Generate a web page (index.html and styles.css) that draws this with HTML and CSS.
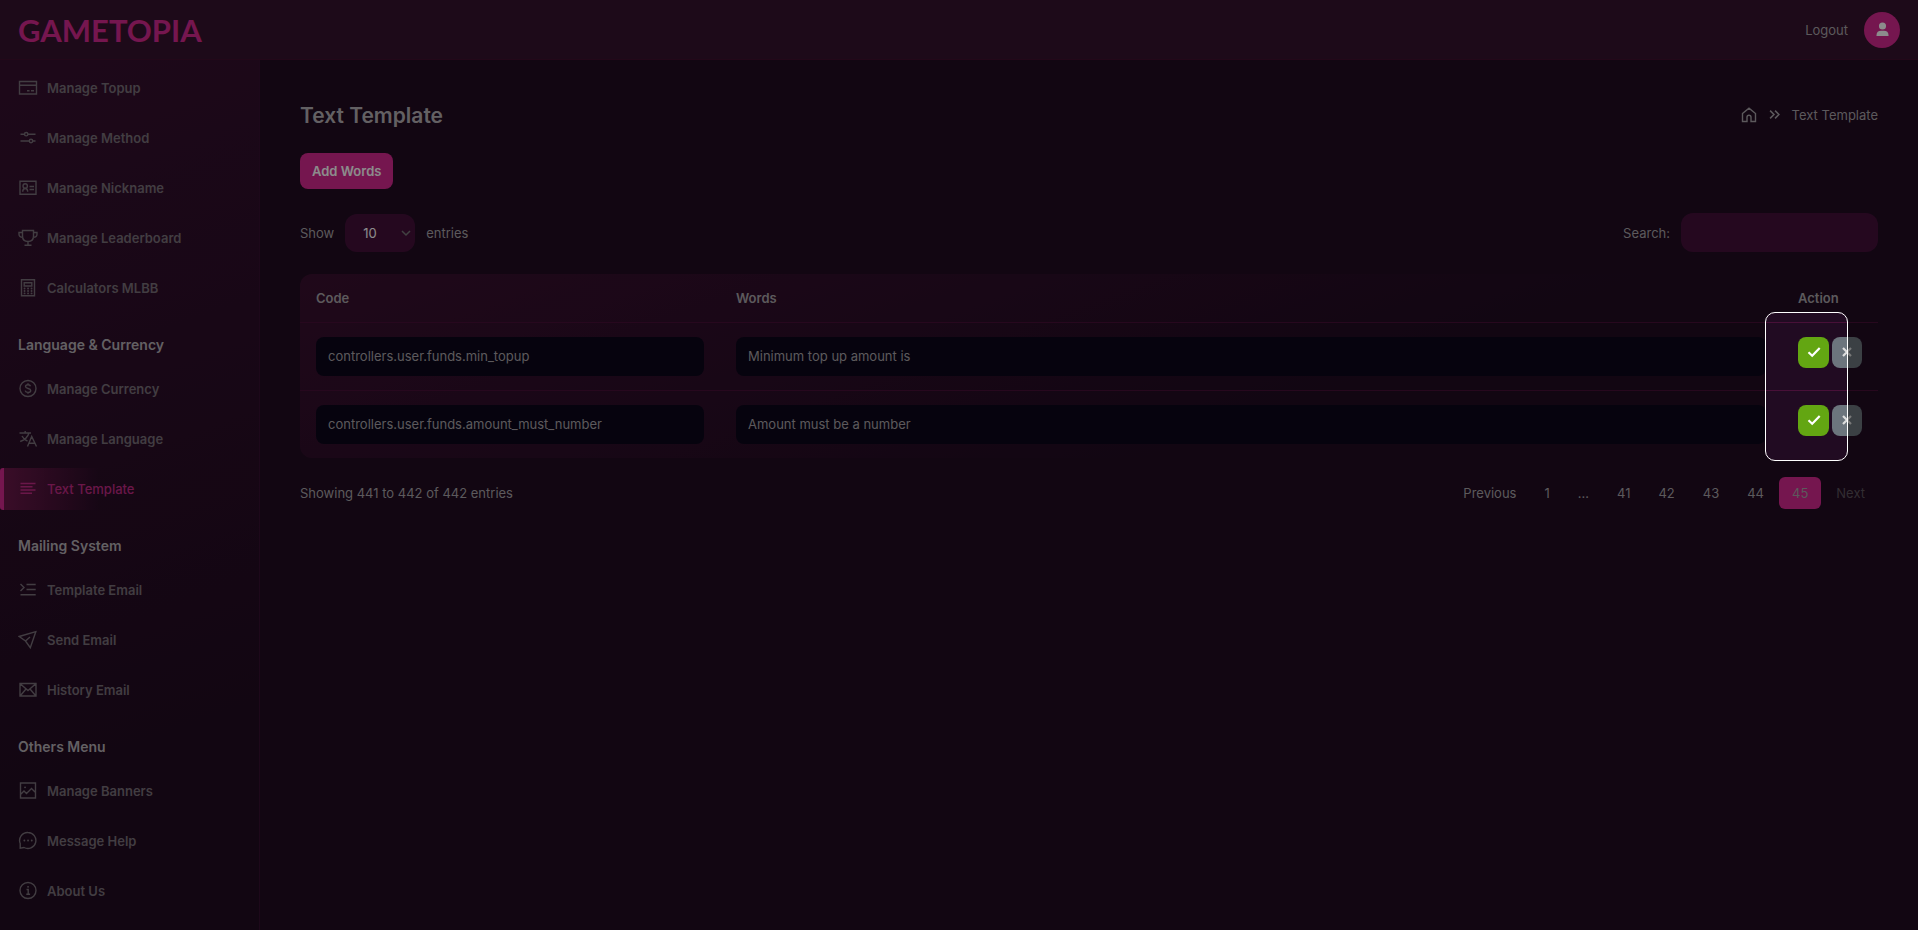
FILE: index.html
```html
<!DOCTYPE html>
<html lang="en">
<head>
    <meta charset="UTF-8">
    <meta name="viewport" content="width=device-width, initial-scale=1.0">
    <title>Text Template</title>
    <link rel="stylesheet" href="styles.css">
</head>
<body>

<!-- Header -->
<header class="header">
    <a href="#" class="logo">GAMETOPIA</a>
    <div class="header-user">
        <a href="#" class="logout">Logout</a>
        <a href="#" class="avatar" aria-label="Profile">
            <svg viewBox="0 0 16 16"><circle cx="8" cy="4.2" r="3.8"/><path d="M1.6 15v-1.200c0-3 1.900-4.600 4.900-4.600h3c3 0 4.900 1.600 4.900 4.600V15z"/></svg>
        </a>
    </div>
</header>

<div class="layout">
    <!-- Sidebar -->
    <nav class="sidebar">
        <ul class="menu">
            <li><a href="#"><svg viewBox="0 0 20 20"><path d="M1.500 3.500h17v12.500h-17zM1.500 7.200h17M9 12.800h2.500M13 12.800h3"/></svg>Manage Topup</a></li>
            <li><a href="#"><svg viewBox="0 0 20 20"><path d="M2.500 6.200h4M10 6.200h7.500M2.500 13h8.800M14.700 13h2.800"/><circle cx="8.200" cy="6.200" r="1.700"/><circle cx="13" cy="13" r="1.700"/></svg>Manage Method</a></li>
            <li><a href="#"><svg viewBox="0 0 20 20"><path d="M2 3.200h16v13H2zM4.700 13.700c0-2.200 1-3.200 2.500-3.200s2.500 1 2.500 3.200M11.500 8.500h4.500M11.500 11.500h4.500"/><circle cx="7.200" cy="8" r="2.200"/></svg>Manage Nickname</a></li>
            <li><a href="#"><svg viewBox="0 0 20 20"><path d="M4.500 2.500h11v5.500c0 3.500-2.200 5.500-5.500 5.500s-5.500-2-5.500-5.500zM4.500 4.500H1v1.700C1 8.200 2.500 9.200 4.800 9.200M15.500 4.500H19v1.700c0 2-1.500 3-3.800 3M10 13.500V17.300M6.500 17.300h7"/></svg>Manage Leaderboard</a></li>
            <li><a href="#"><svg viewBox="0 0 20 20"><path d="M3.500 1.700h13v16h-13zM6.200 4.700h7.600v3.300H6.200z"/><path class="dots" d="M6.500 10.500h.1M10 10.500h.1M13.500 10.500h.1M6.500 13h.1M10 13h.1M13.500 13h.1M6.500 15.400h.1M10 15.400h.1M13.500 15.400h.1"/></svg>Calculators MLBB</a></li>
        </ul>

        <h5 class="menu-title">Language &amp; Currency</h5>
        <ul class="menu">
            <li><a href="#"><svg viewBox="0 0 20 20"><circle cx="10" cy="9.500" r="8"/><path d="M12.500 7.300C12.200 6.200 11.200 5.700 10 5.700c-1.500 0-2.500.7-2.500 1.800 0 2.600 5.200 1.300 5.200 4 0 1.200-1.100 1.900-2.700 1.900-1.400 0-2.500-.6-2.800-1.800M10 4.300v1.400M10 13.400v1.400"/></svg>Manage Currency</a></li>
            <li><a href="#"><svg viewBox="0 0 20 20"><path d="M1.500 4h11.500M7.200 2v2M11 4C9.800 8 6.500 11 2.200 12.500M4 7c1.300 2.600 3.200 4.200 5.500 5M9.500 17.500l4.200-10 4.800 10M11 14.300h5.500"/></svg>Manage Language</a></li>
            <li class="active"><a href="#"><svg viewBox="0 0 20 20"><path d="M2.500 4.500h15M2.500 7.700h12M2.500 11h15M2.500 14.300h11.500"/></svg>Text Template</a></li>
        </ul>

        <h5 class="menu-title">Mailing System</h5>
        <ul class="menu">
            <li><a href="#"><svg viewBox="0 0 20 20"><path d="M2.500 4l3.500 3.500L2.500 11M8.500 4.500h9.200M8.500 9.500h9.200M2.500 14.700h15.200"/></svg>Template Email</a></li>
            <li><a href="#"><svg viewBox="0 0 20 20"><path d="M17.800 1.700L1.200 6.500l6.300 4.500 4.800 6.700zM7.500 11l4.500-4"/></svg>Send Email</a></li>
            <li><a href="#"><svg viewBox="0 0 20 20"><path d="M2 3.500h16v12.500H2zM2.500 4L10 10.500 17.500 4M2.500 15.500L8 9M17.500 15.500L12 9"/></svg>History Email</a></li>
        </ul>

        <h5 class="menu-title">Others Menu</h5>
        <ul class="menu">
            <li><a href="#"><svg viewBox="0 0 20 20"><path d="M2.500 2h15v15h-15zM2.500 13.500l3.500-3.500 2.500 2.500 5-5 4 4"/><path class="dots" d="M7 6.300h.1"/></svg>Manage Banners</a></li>
            <li><a href="#"><svg viewBox="0 0 20 20"><path d="M10 1.500a8 8 0 1 1-4 15L2.200 17.200V12.500A8 8 0 0 1 10 1.500z"/><path class="dots" d="M6.300 9.500h.1M10 9.500h.1M13.700 9.500h.1"/></svg>Message Help</a></li>
            <li><a href="#"><svg viewBox="0 0 20 20"><circle cx="10" cy="9.500" r="8"/><path d="M8.500 8.500H10.200v4.800M8.300 13.300h3.800"/><path class="dots" d="M10 5.800h.1"/></svg>About Us</a></li>
        </ul>
    </nav>

    <!-- Content -->
    <main class="content">
        <div class="page-head">
            <h1>Text Template</h1>
            <div class="breadcrumb">
                <a href="#" aria-label="Home"><svg class="home" viewBox="0 0 16 16"><path d="M1.500 6.500L8 1.200l6.500 5.300v8H10V10.200a2 2 0 0 0-4 0v4.300H1.500z"/></svg></a>
                <svg class="angles" viewBox="0 0 10 10"><path d="M1 1.500L4.500 5 1 8.500M5.500 1.500L9 5 5.500 8.500"/></svg>
                <span>Text Template</span>
            </div>
        </div>

        <button type="button" class="btn-add">Add Words</button>

        <div class="table-tools">
            <label class="length">Show
                <select>
                    <option>10</option>
                    <option>25</option>
                    <option>50</option>
                </select>
                entries</label>
            <label class="search">Search: <input type="search"></label>
        </div>

        <div class="table-wrap">
            <table class="table">
                <thead>
                    <tr>
                        <th class="col-code">Code</th>
                        <th>Words</th>
                        <th class="col-action">Action</th>
                    </tr>
                </thead>
                <tbody>
                    <tr>
                        <td><input type="text" aria-label="Code" value="controllers.user.funds.min_topup"></td>
                        <td><input type="text" aria-label="Words" value="Minimum top up amount is"></td>
                        <td>
                            <div class="actions">
                                <button type="button" class="btn-save" aria-label="Save"><svg viewBox="0 0 14 14"><path d="M1.500 7.200l3.700 3.500L12.700 3"/></svg></button>
                                <button type="button" class="btn-remove" aria-label="Remove"><svg viewBox="0 0 14 14"><path d="M3 3l8 8M11 3l-8 8"/></svg></button>
                            </div>
                        </td>
                    </tr>
                    <tr>
                        <td><input type="text" aria-label="Code" value="controllers.user.funds.amount_must_number"></td>
                        <td><input type="text" aria-label="Words" value="Amount must be a number"></td>
                        <td>
                            <div class="actions">
                                <button type="button" class="btn-save" aria-label="Save"><svg viewBox="0 0 14 14"><path d="M1.500 7.200l3.700 3.500L12.700 3"/></svg></button>
                                <button type="button" class="btn-remove" aria-label="Remove"><svg viewBox="0 0 14 14"><path d="M3 3l8 8M11 3l-8 8"/></svg></button>
                            </div>
                        </td>
                    </tr>
                </tbody>
            </table>
            <!-- dims everything except the action buttons -->
            <div class="spotlight"></div>
        </div>

        <div class="table-foot">
            <p>Showing 441 to 442 of 442 entries</p>
            <div class="pagination">
                <a href="#">Previous</a>
                <a href="#">1</a>
                <span>…</span>
                <a href="#">41</a>
                <a href="#">42</a>
                <a href="#">43</a>
                <a href="#">44</a>
                <a href="#" class="current">45</a>
                <a class="disabled">Next</a>
            </div>
        </div>
    </main>
</div>

</body>
</html>
```
FILE: styles.css
```css
* {
    box-sizing: border-box;
}

body {
    margin: 0;
    height: 100vh;
    display: flex;
    flex-direction: column;
    overflow: hidden;
    background: #210b21;
    color: #a8a3a8;
    font-family: Inter, sans-serif;
    font-size: 13px;
    line-height: 20px;
}

a {
    color: inherit;
    text-decoration: none;
}

svg {
    fill: none;
    stroke: currentColor;
    stroke-width: 1.4;
}

ul, p, h1, h5 {
    margin: 0;
    padding: 0;
    list-style: none;
}

button, input, select {
    font: inherit;
    border: none;
    outline: none;
}

/* header */
.header {
    display: flex;
    flex: none;
    align-items: center;
    justify-content: space-between;
    height: 60px;
    padding: 0 18px;
    background: #36132e;
    border-bottom: 1px solid #40102f;
}

.logo {
    color: #d62890;
    font-family: Lato, sans-serif;
    font-size: 31px;
    font-weight: 700;
    line-height: 36px;
}

.header-user {
    display: flex;
    align-items: center;
    gap: 16px;
}

.avatar {
    display: flex;
    align-items: center;
    justify-content: center;
    width: 36px;
    height: 36px;
    border-radius: 50%;
    background: #d62890;
    color: #fff;
}

.avatar svg {
    width: 15px;
    height: 15px;
    fill: currentColor;
    stroke: none;
}

.layout {
    display: flex;
    flex: 1;
    min-height: 0;
}

/* sidebar */
.sidebar {
    flex: none;
    width: 260px;
    padding-top: 7px;
    border-right: 1px solid #360f30;
    background: linear-gradient(160deg, #36102f, #210b21 80%);
}

.menu {
    display: flex;
    flex-direction: column;
    gap: 8px;
}

.menu a {
    display: flex;
    align-items: center;
    gap: 9px;
    height: 42px;
    padding-left: 18px;
    color: #786f78;
    font-weight: 600;
}

.menu svg {
    width: 20px;
    height: 20px;
}

.menu .dots {
    stroke-width: 1.8;
    stroke-linecap: round;
}

.menu .active a {
    border-left: 4px solid #d62890;
    border-radius: 3px;
    padding-left: 14px;
    background: linear-gradient(90deg, #6a1749, transparent 95px);
    color: #c22a86;
    font-weight: 500;
}

.menu-title {
    padding: 26px 18px 13px;
    color: #b5afb5;
    font-size: 14px;
    font-weight: 600;
    line-height: 20px;
}

/* content */
.content {
    flex: 1;
    padding: 40px 40px 0;
}

.page-head {
    display: flex;
    align-items: center;
    justify-content: space-between;
    height: 31px;
}

.page-head h1 {
    color: #b5b0b5;
    font-size: 21px;
    font-weight: 600;
}

.breadcrumb {
    display: flex;
    align-items: center;
    gap: 12px;
    padding-bottom: 2px;
}

.breadcrumb a {
    display: flex;
}

.home {
    width: 16px;
    height: 16px;
}

.angles {
    width: 11px;
    height: 11px;
}

.btn-add {
    display: block;
    height: 36px;
    margin-top: 22px;
    padding: 0 12px;
    border-radius: 8px;
    background: #d62890;
    color: #fff;
    font-weight: 600;
}

.table-tools {
    display: flex;
    align-items: center;
    justify-content: space-between;
    margin-top: 24px;
}

.length, .search {
    display: flex;
    align-items: center;
    gap: 11px;
}

.length select {
    appearance: none;
    width: 70px;
    height: 38px;
    padding: 0 18px;
    border-radius: 12px;
    background: #44103a url("data:image/svg+xml,%3Csvg xmlns='http://www.w3.org/2000/svg' viewBox='0 0 10 10'%3E%3Cpath fill='none' stroke='%23777' stroke-width='1.500' d='M1 3l4 4 4-4'/%3E%3C/svg%3E") no-repeat right 4px center / 10px;
    color: #fff;
}

.search input {
    width: 197px;
    height: 39px;
    border-radius: 12px;
    background: #44103a;
    color: #fff;
}

/* table */
.table-wrap {
    position: relative;
    margin-top: 22px;
    border-radius: 12px;
    background: linear-gradient(160deg, #3a1030, #210b22 65%);
}

.table {
    width: 100%;
    border-collapse: collapse;
    text-align: left;
}

.table th {
    height: 48px;
    padding: 0 16px;
    font-weight: 600;
}

.table .col-code {
    width: 420px;
}

.table .col-action {
    width: 96px;
}

.table td {
    padding: 14px 16px;
    border-top: 1px solid #481038;
}

.table td input {
    display: block;
    width: 100%;
    height: 39px;
    padding: 0 12px;
    border-radius: 8px;
    background: #0b071b;
    color: #a8a3a8;
}

.actions {
    display: flex;
    gap: 3px;
    height: 39px;
}

.actions button {
    display: flex;
    align-items: center;
    justify-content: center;
    height: 31px;
    padding: 0;
    border-radius: 8px;
    color: #fff;
}

.actions .btn-save {
    width: 31px;
    background: #63a612;
}

.actions .btn-remove {
    width: 30px;
    background: #6c757d;
    color: #ddd;
}

.actions svg {
    width: 14px;
    height: 14px;
    stroke-width: 2.2;
}

.spotlight {
    position: absolute;
    top: 38px;
    right: 30px;
    width: 83px;
    height: 149px;
    border: 1px solid #fff;
    border-radius: 10px;
    box-shadow: 0 0 0 3000px rgba(0, 0, 0, 0.45);
    pointer-events: none;
}

/* pagination */
.table-foot {
    display: flex;
    align-items: center;
    justify-content: space-between;
    margin-top: 19px;
}

.pagination {
    display: flex;
    align-items: center;
    gap: 2px;
}

.pagination a, .pagination span {
    height: 32px;
    padding: 0 13px;
    line-height: 32px;
}

.pagination .current {
    border-radius: 6px;
    background: #d62890;
}

.pagination .disabled {
    color: #5c535c;
}
```
